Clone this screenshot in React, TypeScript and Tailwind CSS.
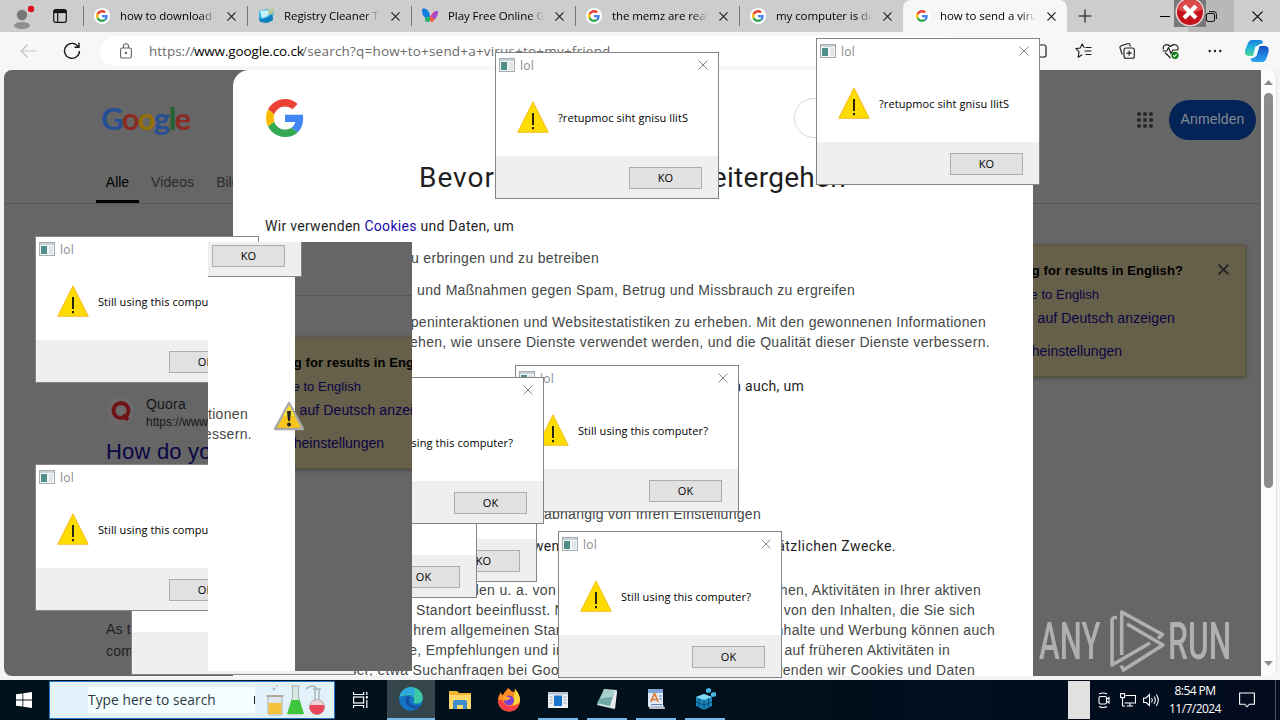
import type { ReactNode } from "react";

const UI = "font-['Open_Sans','Noto_Sans',sans-serif]";

function GoogleG({ className }: { className: string }) {
  return (
    <svg viewBox="0 0 48 48" className={className}>
      <path fill="#EA4335" d="M24 9.5c3.54 0 6.71 1.22 9.21 3.6l6.85-6.85C35.9 2.38 30.47 0 24 0 14.62 0 6.51 5.38 2.56 13.22l7.98 6.19C12.43 13.72 17.74 9.5 24 9.5z" />
      <path fill="#4285F4" d="M46.98 24.55c0-1.57-.15-3.09-.38-4.55H24v9.02h12.94c-.58 2.96-2.26 5.48-4.78 7.18l7.73 6c4.51-4.18 7.09-10.36 7.09-17.65z" />
      <path fill="#FBBC05" d="M10.53 28.59c-.48-1.45-.76-2.99-.76-4.59s.27-3.14.76-4.59l-7.98-6.19C.92 16.46 0 20.12 0 24c0 3.88.92 7.54 2.56 10.78l7.97-6.19z" />
      <path fill="#34A853" d="M24 48c6.48 0 11.93-2.13 15.89-5.81l-7.73-6c-2.15 1.45-4.92 2.3-8.16 2.3-6.26 0-11.57-4.22-13.47-9.91l-7.98 6.19C6.51 42.62 14.62 48 24 48z" />
    </svg>
  );
}

function Cross({ className, width = 1.3 }: { className: string; width?: number }) {
  return (
    <svg viewBox="0 0 10 10" fill="none" stroke="currentColor" strokeWidth={width} className={className}>
      <path d="M.5.5l9 9M9.5.5l-9 9" />
    </svg>
  );
}

function GFavicon() {
  return (
    <span className="flex size-4 shrink-0 items-center justify-center rounded-full bg-white">
      <GoogleG className="size-3" />
    </span>
  );
}

function CleanerFavicon() {
  return (
    <svg viewBox="0 0 16 16" className="size-4 shrink-0">
      <path d="M1 3l8-2 7 3-2 9-7 2-6-3z" fill="#35b5dc" />
      <path d="M2 3l10-1-2 6-6 2z" fill="#c9f2fa" />
      <path d="M10 2l6-2-1 6-4 1z" fill="#b8c79a" />
      <path d="M1 10c3 2 8 1 13-4l1 6-6 3-7-1z" fill="#0e7fc0" />
    </svg>
  );
}

function ButterflyFavicon() {
  return (
    <svg viewBox="0 0 16 16" className="size-4 shrink-0">
      <path d="M0 1c2.500-1 5 0 6.500 2.500C7.500 5 8 7 8 9L4 10C1 9 0 5 0 1z" fill="#0f7ee0" />
      <path d="M3 10l5-2v4c-1 3-4 3-5 0z" fill="#21b36b" />
      <path d="M16 3c-4 0-6 2-8 6l5 2c2-2 3-5 3-8z" fill="#e8408c" />
      <path d="M8 9l5 1c-1 4-4 5-5 3z" fill="#f0623b" />
      <path d="M13 3h3c0 3-1 5-3 8l-3-2z" fill="#a04fd0" />
    </svg>
  );
}

function Tab({ icon, title, active }: { icon: ReactNode; title: string; active?: boolean }) {
  return (
    <div
      className={
        active
          ? "flex h-8 w-[164px] shrink-0 items-center rounded-t-lg bg-[#f7f7f7] pl-[11px]"
          : "flex h-8 w-[164px] shrink-0 items-center pl-[11px]"
      }
    >
      {!active && <span className="-ml-[11px] mr-[10px] h-5 w-px shrink-0 bg-[#777]" />}
      {icon}
      <span className="ml-[10px] w-[98px] overflow-hidden whitespace-nowrap text-[11.5px] leading-4 tracking-[-0.08px] text-black [mask-image:linear-gradient(90deg,#000_82%,transparent_98%)]">
        {title}
      </span>
      <Cross className="ml-[9px] size-[9px] shrink-0 text-[#222]" />
    </div>
  );
}

function TabStrip() {
  return (
    <div className="flex h-8 shrink-0 items-center bg-[#cdcdcd]">
      <div className="flex w-[83px] shrink-0 items-center pl-[13px]">
        <svg viewBox="0 0 22 26" className="h-[26px] w-[22px]">
          <circle cx="9" cy="12" r="5.2" fill="#777" />
          <ellipse cx="9" cy="22.500" rx="8" ry="3.600" fill="#8e8e8e" />
          <circle cx="18" cy="6" r="3.200" fill="#e00b1c" />
        </svg>
        <svg viewBox="0 0 14 14" className="ml-[18px] size-[14px]" fill="none" stroke="#111" strokeWidth="1.2">
          <rect x=".7" y=".7" width="12.6" height="12.6" rx="2" />
          <path d="M1 2.6h12" strokeWidth="3" />
          <path d="M4.7 3v10" />
        </svg>
      </div>
      <Tab icon={<GFavicon />} title="how to download m" />
      <Tab icon={<CleanerFavicon />} title="Registry Cleaner To" />
      <Tab icon={<ButterflyFavicon />} title="Play Free Online G" />
      <Tab icon={<GFavicon />} title="the memz are real" />
      <Tab icon={<GFavicon />} title="my computer is doi" />
      <Tab active icon={<GFavicon />} title="how to send a virus" />
      <svg viewBox="0 0 14 14" className="ml-[11px] size-[14px] shrink-0" stroke="#111" strokeWidth="1.1">
        <path d="M7 .5v13M.5 7h13" />
      </svg>
      <div className="ml-auto flex h-8 shrink-0">
        <span className="flex w-[46px] items-center justify-center">
          <span className="h-px w-[10px] bg-black" />
        </span>
        <span className="flex w-[46px] items-center justify-center bg-[#b8b8b8]">
          <svg viewBox="0 0 11 11" className="size-[11px]" fill="none" stroke="#111">
            <rect x=".5" y="2.5" width="8" height="8" rx="1.5" />
            <path d="M3 .7h5a2.4 2.4 0 012.4 2.4V8" />
          </svg>
        </span>
        <span className="flex w-[46px] items-center justify-center">
          <Cross className="size-[11px] text-black" width={1} />
        </span>
      </div>
    </div>
  );
}

function Toolbar() {
  return (
    <div className="flex h-[38px] shrink-0 items-center bg-[#f7f7f7]">
      <svg viewBox="0 0 16 14" className="ml-5 h-[14px] w-4" fill="none" stroke="#c4c4c4" strokeWidth="1.2">
        <path d="M7.500.8L1 7l6.500 6.200M1 7h15" />
      </svg>
      <svg viewBox="0 0 18 18" className="ml-[27px] size-[18px]" fill="none" stroke="#1a1a1a" strokeWidth="1.4">
        <path d="M15.300 4.800A7.500 7.500 0 1016.500 9M16 .8v4.400h-4.500" />
      </svg>
      <div className="ml-[19px] flex h-[30px] w-[858px] shrink-0 items-center rounded-full bg-white pl-5">
        <svg viewBox="0 0 12 16" className="h-4 w-3" fill="none" stroke="#666" strokeWidth="1.1">
          <rect x=".6" y="5" width="10.800" height="10" rx="1.500" />
          <path d="M3.500 5V3.200a2.500 2.500 0 015 0V5" />
          <circle cx="6" cy="10" r=".7" fill="#666" />
        </svg>
        <div className="ml-[17px] flex whitespace-nowrap text-[13.500px] leading-5 text-[#6b6b6b]">
          <span className="w-[45px]">https://</span>
          <span className="w-[108px] tracking-[-0.15px] text-black">www.google.co.ck</span>
          <span className="tracking-[0.19px]">/search?q=how+to+send+a+virus+to+my+friend</span>
        </div>
      </div>
      <div className="ml-[73px] flex items-center text-[#1a1a1a]">
        <svg viewBox="0 0 16 16" className="size-4" fill="none" stroke="currentColor" strokeWidth="1.2">
          <rect x="1" y="2" width="14" height="12" rx="2" />
          <path d="M8 1v14" />
        </svg>
        <svg viewBox="0 0 17 16" className="ml-[28px] h-4 w-[17px]" fill="none" stroke="currentColor" strokeWidth="1.1" strokeLinejoin="round">
          <path d="M9.500 4.600H9.200L7.200.9 5.200 5 .9 5.600l3.100 3-.8 5.600 4-2.500M10.500 4.500h6M9.500 8h7M10.500 11.500h6" />
        </svg>
        <svg viewBox="0 0 16 16" className="ml-[27px] size-4" fill="none" stroke="currentColor" strokeWidth="1.1">
          <rect x="5" y="5" width="10.300" height="10.300" rx="2" />
          <path d="M10.150 7.500v5.300M7.500 10.150h5.300M3.300 11.500L1 5a2 2 0 011.300-2.300L8.500.7A2 2 0 0111 2l.4 1.500" />
        </svg>
        <svg viewBox="0 0 18 16" className="ml-[27px] h-4 w-[18px]" fill="none" stroke="currentColor" strokeWidth="1.1">
          <path d="M1.500 6.500C0 2 5 0 8.500 3.500 12 0 17.500 2 15.800 7M3 9.500l5.500 5.500M.5 8h4.200l1.800-3.500 2.500 6L11 7h5" />
          <circle cx="13" cy="12.300" r="3.600" fill="#107c10" stroke="none" />
          <path d="M11.300 12.400l1.200 1.200 2.200-2.400" stroke="#fff" />
        </svg>
        <svg viewBox="0 0 14 4" className="ml-[28px] h-1 w-[14px]" fill="currentColor">
          <circle cx="1.700" cy="2" r="1.200" />
          <circle cx="7" cy="2" r="1.200" />
          <circle cx="12.300" cy="2" r="1.200" />
        </svg>
        <svg viewBox="0 0 24 22" className="ml-[23px] h-[22px] w-6">
          <defs>
            <linearGradient id="copA" x1="0" y1="0" x2="0" y2="1">
              <stop offset="0" stopColor="#1a7fe0" />
              <stop offset=".5" stopColor="#22b6d8" />
              <stop offset="1" stopColor="#52d68c" />
            </linearGradient>
            <linearGradient id="copB" x1="0" y1="0" x2="0" y2="1">
              <stop offset="0" stopColor="#1550c0" />
              <stop offset="1" stopColor="#2aa4f4" />
            </linearGradient>
          </defs>
          <path d="M7 0h8c2 0 2.500 1 3 3l-5 2-4 11H4c-4 0-5-3-3.500-7L3 3C4 1 5 0 7 0z" fill="url(#copA)" />
          <path d="M17 22H9c-2 0-3-1-3.500-3l5-2 4-11h5c4 0 5 3 3.700 7l-2 6c-1 2-2 3-4.200 3z" fill="url(#copB)" />
          <path d="M10.500 6h4l-3 10H8z" fill="#f2fbff" />
        </svg>
      </div>
    </div>
  );
}

const BODY = "font-['Liberation_Sans',Arial,sans-serif] text-[14px] leading-5 tracking-[0.32px] text-[#444746]";
const STRONG = "font-[Roboto,sans-serif] text-[14px] leading-5 tracking-[0.3px] text-[#1f1f1f]";

function Row({ className, children }: { className: string; children: ReactNode }) {
  return <div className={`flex h-5 shrink-0 whitespace-nowrap ${className}`}>{children}</div>;
}

function ConsentDialog() {
  return (
    <div className="absolute left-[229px] top-0 flex h-[606px] w-[800px] flex-col overflow-hidden rounded-t-2xl bg-white pl-8">
      <div className="mt-7 flex h-10 shrink-0 items-center">
        <GoogleG className="ml-[1px] size-[38px]" />
        <span className="ml-[490px] h-10 w-[150px] rounded-full border border-[#d5d7da]" />
      </div>
      <div className="mt-[20px] flex h-10 shrink-0 whitespace-nowrap font-[Roboto,sans-serif] text-[28px] leading-10 text-[#1f1f1f]">
        <span className="ml-[154px] tracking-[1px]">Bevor</span>
        <span className="ml-auto flex w-[200px] justify-end tracking-[0.3px]">weitergehen</span>
        <span className="w-[187px]" />
      </div>
      <Row className={`mt-[18px] ${STRONG}`}>
        <span>
          Wir verwenden <span className="text-[#1a0dab]">Cookies</span> und Daten, um
        </span>
      </Row>
      <Row className={`mt-3 ${BODY}`}>
        <span className="flex w-[334px] justify-end">zu erbringen und zu betreiben</span>
      </Row>
      <Row className={`mt-3 ${BODY}`}>
        <span className="flex w-[590px] justify-end">verhindern und Maßnahmen gegen Spam, Betrug und Missbrauch zu ergreifen</span>
      </Row>
      <Row className={`mt-3 ${BODY}`}>
        <span className="flex w-[721px] justify-end">
          Zielgruppeninteraktionen und Websitestatistiken zu erheben. Mit den gewonnenen Informationen
        </span>
      </Row>
      <Row className={BODY}>
        <span className="flex w-[725px] justify-end">
          verstehen, wie unsere Dienste verwendet werden, und die Qualität dieser Dienste verbessern.
        </span>
      </Row>
      <Row className={`mt-6 ${STRONG}`}>
        <span className="flex w-[539px] justify-end">Daten auch, um</span>
      </Row>
      <Row className={`mt-[108px] ${BODY}`}>
        <span className="flex w-[496px] justify-end tracking-[0.29px]">abhängig von Ihren Einstellungen</span>
      </Row>
      <Row className={`mt-3 ${STRONG}`}>
        <span className="ml-[248px] w-[80px]">verwenden</span>
        <span className="flex w-[303px] justify-end tracking-[0.45px]">zusätzlichen Zwecke.</span>
      </Row>
      <Row className={`mt-6 ${BODY}`}>
        <span className="flex w-[291px] justify-end">werden u. a. von</span>
        <span className="flex w-[425px] justify-end">ansehen, Aktivitäten in Ihrer aktiven</span>
      </Row>
      <Row className={BODY}>
        <span className="ml-[151px] w-[200px]">Standort beeinflusst. Nicht</span>
        <span className="flex w-[359px] justify-end tracking-[0.28px]">von den Inhalten, die Sie sich</span>
      </Row>
      <Row className={BODY}>
        <span className="ml-[144px] w-[200px]">Ihrem allgemeinen Standort</span>
        <span className="flex w-[386px] justify-end">Inhalte und Werbung können auch</span>
      </Row>
      <Row className={BODY}>
        <span className="ml-[108px] w-[200px]">Inhalte, Empfehlungen und indi</span>
        <span className="flex w-[377px] justify-end tracking-[0.28px]">auf früheren Aktivitäten in</span>
      </Row>
      <Row className={BODY}>
        <span className="w-[310px]">diesem Browser, etwa Suchanfragen bei Google</span>
        <span className="flex w-[400px] justify-end">verwenden wir Cookies und Daten</span>
      </Row>
    </div>
  );
}

function LanguageCard() {
  return (
    <div className="mr-[15px] mt-[41px] flex h-[132px] w-[246px] shrink-0 flex-col self-end border border-[#5d553a] bg-[#665f4a] font-['Liberation_Sans',Arial,sans-serif] text-[14px] leading-5 text-[#0a0544] shadow-[0_1px_4px_rgba(0,0,0,0.35)]">
      <div className="mt-[15px] flex h-5 whitespace-nowrap text-[13px] font-bold tracking-[0.1px] text-black">
        <span className="flex w-[182px] justify-end">Looking for results in English?</span>
        <Cross className="ml-[35px] mt-[3px] size-[11px] text-[#222]" width={1.5} />
      </div>
      <Row className="mt-1 text-[13px]">
        <span className="flex w-[98px] justify-end tracking-[0.05px]">Change to English</span>
      </Row>
      <Row className="mt-[3px]">
        <span className="flex w-[174px] justify-end tracking-[0.1px]">Immer auf Deutsch anzeigen</span>
      </Row>
      <Row className="mt-[13px]">
        <span className="flex w-[121px] justify-end">Sucheinstellungen</span>
      </Row>
    </div>
  );
}

function SearchPage() {
  return (
    <div className="relative flex h-[606px] w-[1257px] shrink-0 flex-col overflow-hidden rounded-l-lg bg-[#666] font-['Liberation_Sans',Arial,sans-serif]">
      <div className="mt-[30px] flex h-10 shrink-0 items-center">
        <span className="-mt-1 ml-[97px] font-[Lato,sans-serif] text-[31px] font-bold leading-10 tracking-[-1.7px]">
          <span className="text-[#274f93]">G</span>
          <span className="text-[#8a2a22]">o</span>
          <span className="text-[#957003]">o</span>
          <span className="text-[#274f93]">g</span>
          <span className="text-[#1f6432]">l</span>
          <span className="text-[#8a2a22]">e</span>
        </span>
        <svg viewBox="0 0 16 16" className="ml-auto size-4" fill="#252627">
          <circle cx="2" cy="2" r="2" /><circle cx="8" cy="2" r="2" /><circle cx="14" cy="2" r="2" />
          <circle cx="2" cy="8" r="2" /><circle cx="8" cy="8" r="2" /><circle cx="14" cy="8" r="2" />
          <circle cx="2" cy="14" r="2" /><circle cx="8" cy="14" r="2" /><circle cx="14" cy="14" r="2" />
        </svg>
        <span className="ml-4 mr-[5px] flex h-10 w-[87px] items-center justify-center rounded-full bg-[#042457] pb-px text-[14px] tracking-[0.1px] text-[#858a94]">
          Anmelden
        </span>
      </div>
      <div className="mt-[30px] flex h-[34px] shrink-0 border-b border-[#565656] text-[14px] leading-[25px] text-[#2a2b2d]">
        <span className="ml-[92px] h-[33px] w-[43px] border-b-[3px] border-black text-center text-black">Alle</span>
        <span className="ml-3 tracking-[0.1px]">Videos</span>
        <span className="ml-[22px]">Bilder</span>
      </div>
      <LanguageCard />
      <div className="mt-[20px] flex h-8 shrink-0 pl-[103px]">
        <span className="flex size-[27px] items-center justify-center rounded-full bg-[#6c6a6a]">
          <svg viewBox="0 0 20 20" className="size-5" fill="none">
            <circle cx="10" cy="9.500" r="7.500" stroke="#6f1417" strokeWidth="4" />
            <path d="M12 14l5 5" stroke="#6f1417" strokeWidth="4" />
          </svg>
        </span>
        <div className="-mt-0.5 ml-3 flex flex-col whitespace-nowrap text-[#151617]">
          <span className="text-[14px] leading-[18px] tracking-[0.2px]">Quora</span>
          <span className="text-[12px] leading-[18px]">https://www.quora.com</span>
        </div>
      </div>
      <div className="mt-[9px] shrink-0 whitespace-nowrap pl-[102px] text-[22px] leading-7 tracking-[0.2px] text-[#0a0544]">How do you send</div>
      <div className="mt-[152px] shrink-0 whitespace-nowrap pl-[102px] text-[14px] leading-[22px] tracking-[0.2px] text-[#1f2022]">
        <div>As the</div>
        <div>computer</div>
      </div>
      <ConsentDialog />
    </div>
  );
}

function AppIcon() {
  return (
    <svg viewBox="0 0 16 14" className="h-[14px] w-4">
      <rect x=".5" y=".5" width="15" height="13" fill="#f4f6f6" stroke="#a7acae" />
      <rect x="1" y="1" width="14" height="2" fill="#c6d3d8" />
      <rect x="2" y="4" width="6" height="8" fill="#4e8f8b" />
      <rect x="10" y="4" width="4" height="8" fill="#dfe5e8" />
    </svg>
  );
}

function MessageWindow({ className, mirrored }: { className: string; mirrored?: boolean }) {
  return (
    <div className={`absolute flex h-[147px] w-[224px] flex-col border border-[#858585] bg-white text-black ${className}`}>
      <div className="flex h-6 shrink-0 items-center pl-[3px] text-[12px] text-[#8c8c8c]">
        <AppIcon />
        <span className="ml-[5px] mt-px tracking-[0.3px]">lol</span>
        <Cross className="ml-auto mr-[10px] size-[10px] text-[#858585]" width={1} />
      </div>
      <div className="flex h-[79px] shrink-0 items-center pl-[21px]">
        <svg viewBox="0 0 32 32" className="mt-[1px] size-8 shrink-0">
          <path d="M16 .8L31.300 31.300H.7z" fill="#ffdc00" stroke="#f3bd2c" strokeWidth="1" />
          <path d="M16 12v12M16 26v2.200" stroke="#111" strokeWidth="1.800" />
        </svg>
        <span className="ml-[9px] mt-[3px] whitespace-nowrap text-[11px] leading-4 tracking-[0.08px]">
          {mirrored ? "?retupmoc siht gnisu llitS" : "Still using this computer?"}
        </span>
      </div>
      <div className="flex min-h-0 flex-1 justify-end bg-[#efefef] pr-4 pt-[11px]">
        <span className="flex h-[22px] w-[73px] items-center justify-center border border-[#adadad] bg-[#e1e1e1] text-[11px]">
          {mirrored ? "KO" : "OK"}
        </span>
      </div>
    </div>
  );
}

function Watermark() {
  return (
    <div className="absolute left-[1039px] top-[610px] flex h-[62px] w-[200px] font-[Roboto,sans-serif] text-[52px] font-medium leading-[63px] text-[#b0b0b0]">
      <span className="w-[71px] shrink-0">
        <span className="block origin-left scale-x-[0.600]">ANY</span>
      </span>
      <svg viewBox="0 0 56 62" className="h-[62px] w-[56px] shrink-0" fill="none" stroke="#b0b0b0" strokeWidth="3.600" strokeLinejoin="round">
        <path d="M7 7.500H5Q2 7.500 2 11V55L40 33M11.700 45V2L52.500 24.500 48 28.500M17 14L53 35 13.500 60 11 55.500" />
      </svg>
      <span className="ml-[2px] w-[64px] shrink-0">
        <span className="block origin-left scale-x-[0.610]">RUN</span>
      </span>
    </div>
  );
}

function ScreenFragment() {
  return (
    <div className="absolute left-[208px] top-[242px] h-[429px] w-[204px] overflow-hidden">
      <div className="absolute left-[-946px] top-[-150px] h-[720px] w-[1280px]">
        <div className="ml-1 mt-[70px] flex">
          <SearchPage />
        </div>
        <MessageWindow mirrored className="left-[816px] top-[38px]" />
      </div>
    </div>
  );
}

function Slot({ className, children, running }: { className: string; children: ReactNode; running?: boolean }) {
  return (
    <span className={`flex h-10 w-10 shrink-0 flex-col items-center ${className}`}>
      <span className="flex h-[38px] items-center">{children}</span>
      {running && <span className="h-0.5 w-full bg-[#76b9ed]" />}
    </span>
  );
}

function Taskbar() {
  return (
    <div className="flex h-10 shrink-0 items-center bg-gradient-to-r from-[#00121b] via-[#00101c] to-[#020c1e] text-white">
      <svg viewBox="0 0 16 16" className="ml-4 size-4 shrink-0" fill="#fff">
        <path d="M0 2.300l6.500-.9v6.200H0zM7.300 1.200L16 0v7.600H7.300zM0 8.400h6.500v6.200L0 13.700zM7.300 8.400H16V16l-8.700-1.200z" />
      </svg>
      <div className="ml-[17px] flex h-[38px] w-[286px] shrink-0 items-center border border-[#1c7cc9] bg-[#e3f2fa] pl-[38px] text-[#2c3a42]">
        <span className="flex h-[26px] w-[167px] items-center justify-between whitespace-nowrap bg-[#f4fdff] text-[13.700px] tracking-[0.1px]">
          Type here to search
          <span className="h-2 w-px bg-[#222]" />
        </span>
        <svg viewBox="0 0 62 32" className="ml-[10px] h-8 w-[62px] shrink-0" fill="none">
          <path d="M3 12v17q0 2 2 2h10q2 0 2-2V12" fill="#dfe6ea" stroke="#aab4ba" />
          <path d="M1.500 12h17" stroke="#b0a898" strokeWidth="2" />
          <path d="M3.500 19h13v11h-13z" fill="#f5c23c" />
          <circle cx="9" cy="5" r="1.500" fill="#b4bcc0" />
          <circle cx="12" cy="2" r="1" fill="#b4bcc0" />
          <path d="M26 2h9M27.500 2v11L23 30h15L33.500 13V2" fill="#d9e8e0" stroke="#a8b4b0" />
          <path d="M26.500 16h8l4.500 14H22z" fill="#3fc43c" />
          <path d="M41 5c4-4 9-4 11 0M48 5h8M50 5v12M54 5v12" stroke="#a8b4ba" strokeWidth="1.400" />
          <circle cx="52" cy="23" r="7.500" fill="#ecd5d8" stroke="#b8a8aa" />
          <path d="M44.800 21h14.400a7.500 7.500 0 11-14.400 0z" fill="#e8475a" />
        </svg>
      </div>
      <span className="flex h-10 w-[52px] shrink-0 items-center justify-center">
        <svg viewBox="0 0 16 16" className="size-4" fill="none" stroke="#fff" strokeWidth="1.200">
          <path d="M.6 0v2.500h10V0M.6 16v-2.500h10V16M13.800 0v3M13.800 8v8" />
          <rect x=".6" y="5" width="10" height="6" />
          <rect x="12.800" y="4" width="2" height="2.500" fill="#fff" stroke="none" />
        </svg>
      </span>
      <Slot running className="w-12 bg-[#35454c]">
        <svg viewBox="0 0 24 24" className="size-6">
          <circle cx="12" cy="12" r="11.800" fill="#1674c4" />
          <path d="M.4 10C2 2 9-1 15 .6c6 1.500 9 6 8.800 11-.3 4-4 5.500-8 4.800-2-.4-1-2-.6-3.400.6-3-2-5-5-5C6 8 2 9 .4 10z" fill="#3cc9a4" />
          <path d="M.4 10C2 4 6 1 11 .3c6 0 5 5 4 9-1-1.500-3-2.300-5-2.300-4 0-8 1-9.600 3z" fill="#2fa8e0" />
          <path d="M8 9c-4 5 0 12 8 13 3-.5 5-2.500 6-4-8 3-14-2-11-8z" fill="#1453a4" />
        </svg>
      </Slot>
      <Slot className="ml-[5px]">
        <svg viewBox="0 0 22 20" className="mt-0.5 h-5 w-[22px]">
          <path d="M0 1h8l2 2h12v16H0z" fill="#f0b632" />
          <path d="M0 5h22v14H0z" fill="#ffd768" />
          <path d="M4 19v-7q0-2 2-2h10q2 0 2 2v7h-4v-4H8v4z" fill="#3b8ed0" />
        </svg>
      </Slot>
      <Slot className="ml-[9px]">
        <svg viewBox="0 0 24 24" className="mt-0.5 size-6">
          <path d="M12 23.500C5 23.500 1 18 1 12.500 1 9 2.500 6 4 4c0 2 1 3 2 3 1-3 4-5 5-7 2 1 3 4 7 4 0 0-.5-2 0-3 3 3 5 7 5 11.500 0 6-4 11-11 11z" fill="#ff8a1f" />
          <path d="M18 1c3 3 5 7 5 11.500-1 3-4 5-7 4z" fill="#ffd43a" />
          <path d="M1 12c1 8 7 11.500 11 11.500S21 21 22.500 15c-3 4-15 6-17-3z" fill="#f83a4d" />
          <circle cx="12" cy="12.500" r="5" fill="#7b3fd6" />
          <path d="M6 9c3-2 5 0 8 1-1 2-3 1-5 3-2-1-3-2-3-4z" fill="#ffa92e" />
        </svg>
      </Slot>
      <Slot running className="ml-[9px]">
        <svg viewBox="0 0 20 16" className="mt-0.5 h-4 w-5">
          <rect width="20" height="16" fill="#eef1f3" />
          <rect width="20" height="2.500" fill="#b9c4cc" />
          <rect x="6" y="3.500" width="8" height="10.500" fill="#1874cc" />
          <path d="M1.500 5h3M1.500 8h3M1.500 11h3M15.500 5h3M15.500 8h3M15.500 11h3" stroke="#9aa5ad" />
        </svg>
      </Slot>
      <Slot running className="ml-[9px]">
        <svg viewBox="0 0 22 22" className="size-[22px]">
          <path d="M8 1l13 1-3 19-17-4z" fill="#cfe0e0" />
          <path d="M8 2l11 1-5 15-13-3z" fill="#6ea9a6" />
          <path d="M8 2l11 1-2 6C12 9 8 10 4 11z" fill="#a7d0cc" />
          <path d="M19 3l2 1-2 17-5-3z" fill="#e8ecec" />
        </svg>
      </Slot>
      <Slot running className="ml-[9px]">
        <svg viewBox="0 0 18 22" className="h-[22px] w-[18px]">
          <path d="M1 1h15v16l2 4H3l-2-3z" fill="#dfe9f4" />
          <path d="M1 1h15v4H1z" fill="#7fa6d6" />
          <path d="M4 14l3-8h1l3 8M5.500 11.500h4" stroke="#e2762d" strokeWidth="1.600" fill="none" />
          <path d="M12 8h3M12 11h3M4 16.500h11" stroke="#5a86bd" strokeWidth="1.200" />
          <path d="M2 18h15l1 3H3z" fill="#b7c2ce" />
        </svg>
      </Slot>
      <Slot running className="ml-[9px]">
        <svg viewBox="0 0 22 22" className="size-[22px]">
          <path d="M2 9l8-3 8 3v9l-8 4-8-4z" fill="#1a86bd" />
          <path d="M2 9l8-3 8 3-8 3z" fill="#7ddcf4" />
          <path d="M10 12v10M5 10.500v9M14.500 10.500v9M2 14l8 3 8-3" stroke="#0a4a72" fill="none" />
          <path d="M12 1l3-1 2 1v3l-3 1-2-1zM17 5l3-1 2 1v3l-3 1-2-1z" fill="#44b8e4" />
        </svg>
      </Slot>
      <span className="ml-auto h-[38px] w-[22px] shrink-0 bg-[#e1e1e1]" />
      <svg viewBox="0 0 14 16" className="ml-[7px] h-4 w-[14px] shrink-0" fill="none" stroke="#fff" strokeWidth="1.100">
        <rect x="2" y="4.500" width="7.500" height="7.500" rx="1.500" />
        <path d="M10 7l2-1.500v5.500L10 9.500M2 2q4-2 8 0M2 14.500q4 2 8 0" />
      </svg>
      <svg viewBox="0 0 16 14" className="ml-[9px] h-[14px] w-4 shrink-0" fill="none" stroke="#fff" strokeWidth="1.100">
        <path d="M5.500 2.500h10v7.500H4.500M10 10v3M6.500 13H13M2.500 5v8H5" />
        <rect x=".6" y=".6" width="4" height="4" />
      </svg>
      <svg viewBox="0 0 17 14" className="ml-[7px] h-[14px] w-[17px] shrink-0" fill="none" stroke="#fff" strokeWidth="1.100">
        <path d="M.6 5h2.600L6.500 1.500v11L3.200 9.500H.6zM8.500 5q1.500 2 0 4.500M11 3.500q2.600 3.500 0 7.500M13.300 1.500q4 5.500 0 11.500" />
      </svg>
      <div className="ml-[4px] flex w-[62px] shrink-0 flex-col items-center whitespace-nowrap text-[12px] leading-[18px] tracking-[-0.55px]">
        <span>8:54 PM</span>
        <span>11/7/2024</span>
      </div>
      <svg viewBox="0 0 16 16" className="ml-[13px] mr-[20px] size-4 shrink-0" fill="none" stroke="#fff" strokeWidth="1.100">
        <path d="M.6 1h14.800v11.200h-5L8 14.800l-2.400-2.600h-5z" />
      </svg>
      <span className="mr-1 h-10 w-px shrink-0 bg-[#4a5560]" />
    </div>
  );
}

export default function App() {
  return (
    <div className={`relative flex h-[720px] w-[1280px] flex-col overflow-hidden bg-[#f4f4f4] ${UI}`}>
      <TabStrip />
      <Toolbar />
      <div className="flex h-[610px] shrink-0 pl-1">
        <SearchPage />
        <div className="flex h-[606px] w-[16px] shrink-0 flex-col items-center rounded-r-lg border-r border-[#e4e4e4] bg-[#fcfcfc] text-[#8b8b8b]">
          <svg viewBox="0 0 9 5" className="mt-[10px] h-[5px] w-[9px]" fill="currentColor"><path d="M4.500 0L9 5H0z" /></svg>
          <span className="mt-2 h-[395px] w-[9px] rounded-full bg-[#8b8b8b]" />
          <svg viewBox="0 0 9 5" className="mb-[10px] mt-auto h-[5px] w-[9px]" fill="currentColor"><path d="M0 0h9L4.500 5z" /></svg>
        </div>
      </div>
      <Taskbar />

      <MessageWindow className="left-[131px] top-[528px]" />
      <MessageWindow mirrored className="left-[313px] top-[435px]" />
      <MessageWindow className="left-[253px] top-[451px]" />
      <MessageWindow className="left-[515px] top-[365px]" />
      <MessageWindow className="left-[320px] top-[377px]" />
      <MessageWindow className="left-[558px] top-[531px]" />
      <MessageWindow className="left-[35px] top-[236px]" />
      <MessageWindow className="left-[35px] top-[464px]" />
      <MessageWindow mirrored className="left-[495px] top-[52px]" />
      <MessageWindow mirrored className="left-[816px] top-[38px]" />
      <ScreenFragment />
      <svg viewBox="0 0 32 30" className="absolute left-[273px] top-[401px] h-[30px] w-8">
        <path d="M16 2L30 28H2z" fill="#f8c51c" stroke="#a9a9a9" strokeWidth="2.500" strokeLinejoin="round" />
        <path d="M16 4l6 11H10z" fill="#f8e23a" />
        <path d="M14 10h4l-1 10h-2z" fill="#222" />
        <circle cx="16" cy="23.500" r="2" fill="#222" />
      </svg>
      <svg viewBox="0 0 32 28" className="absolute left-[1174px] top-0 h-7 w-8">
        <rect width="32" height="27" fill="#777" />
        <circle cx="16" cy="12" r="14.500" fill="#e9d5d5" />
        <circle cx="16" cy="12" r="13" fill="#c6121c" />
        <path d="M3.500 9a13 13 0 0125 0c-7 5-18 5-25 0z" fill="#dc4a4c" />
        <path d="M10 6l12 12M22 6L10 18" stroke="#fff" strokeWidth="4.200" />
      </svg>
      <Watermark />
    </div>
  );
}
